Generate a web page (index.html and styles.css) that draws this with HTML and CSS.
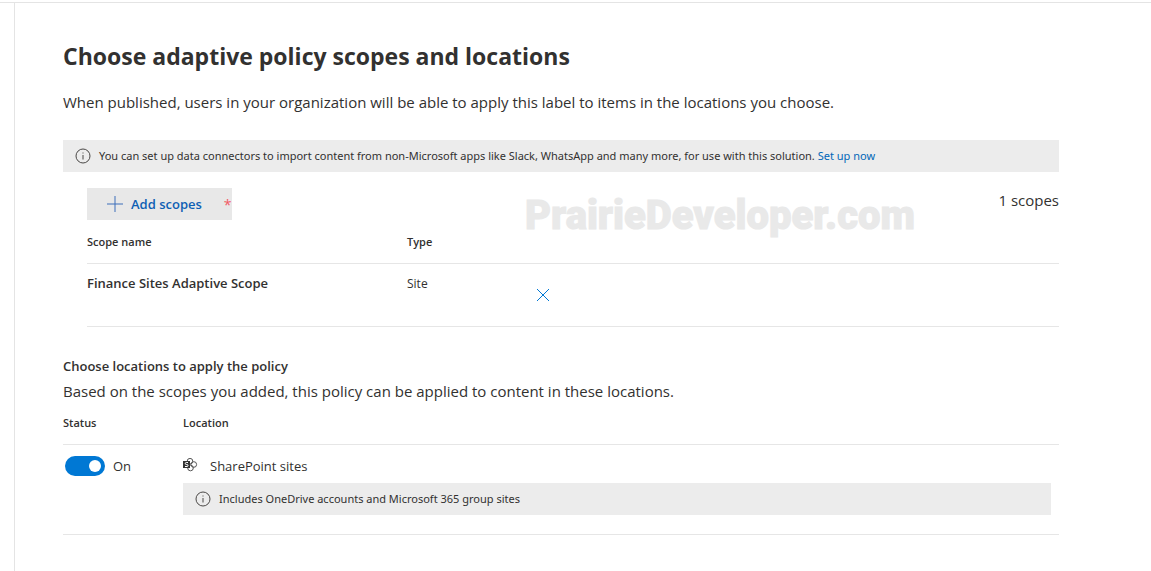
FILE: index.html
```html
<!DOCTYPE html>
<html lang="en">
<head>
<meta charset="utf-8">
<meta name="viewport" content="width=device-width, initial-scale=1">
<title>Choose adaptive policy scopes and locations</title>
<link rel="stylesheet" href="styles.css">
</head>
<body>
<div class="shell">
  <main class="panel">
    <h1 class="title">Choose adaptive policy scopes and locations</h1>
    <p class="lead">When published, users in your organization will be able to apply this label to items in the locations you choose.</p>

    <div class="notice">
      <svg class="info-icon" viewBox="0 0 16 16" aria-hidden="true"><circle cx="8" cy="8" r="7"/><path d="M8 7v4.500M8 4.500v1"/></svg>
      <p class="notice-text">You can set up data connectors to import content from non-Microsoft apps like Slack, WhatsApp and many more, for use with this solution. <a class="link" href="#">Set up now</a></p>
    </div>

    <section class="scopes">
      <div class="toolbar">
        <button class="add-button" type="button">
          <svg class="plus-icon" viewBox="0 0 16 16" aria-hidden="true"><path d="M8 0v16M0 8h16"/></svg>
          <span class="add-label">Add scopes</span>
          <span class="required">*</span>
        </button>
        <span class="count">1 scopes</span>
        <div class="watermark">PrairieDeveloper.com</div>
      </div>
      <table class="grid scope-grid">
        <colgroup><col class="col-name"><col class="col-type"><col></colgroup>
        <thead><tr><th scope="col">Scope name</th><th scope="col">Type</th><td></td></tr></thead>
        <tbody>
          <tr>
            <td class="scope-name">Finance Sites Adaptive Scope</td>
            <td>Site</td>
            <td><button class="remove-button" type="button" aria-label="Remove scope"><svg class="remove-icon" viewBox="0 0 14 14" aria-hidden="true"><path d="M1 1l12 12M13 1L1 13"/></svg></button></td>
          </tr>
        </tbody>
      </table>
    </section>

    <section class="locations">
      <h2 class="subtitle">Choose locations to apply the policy</h2>
      <p class="lead">Based on the scopes you added, this policy can be applied to content in these locations.</p>
      <table class="grid location-grid">
        <colgroup><col class="col-status"><col></colgroup>
        <thead><tr><th scope="col">Status</th><th scope="col">Location</th></tr></thead>
        <tbody>
          <tr>
            <td>
              <label class="switch"><input class="toggle" type="checkbox" role="switch" checked><span>On</span></label>
            </td>
            <td class="location-cell">
              <div class="location">
                <svg class="site-icon" viewBox="0 0 16 16" aria-hidden="true">
                  <circle class="petal" cx="7" cy="3.200" r="2.800"/><circle class="petal" cx="10.800" cy="6.500" r="2.800"/><circle class="petal" cx="7.500" cy="10" r="2.800"/>
                  <rect class="tile" x="0" y="3" width="7" height="7"/>
                  <path class="tile-mark" d="M5 4.500H3.300a1 1 0 0 0 0 2h.700a1 1 0 0 1 0 2h-2"/>
                </svg>
                <span>SharePoint sites</span>
              </div>
              <div class="notice">
                <svg class="info-icon" viewBox="0 0 16 16" aria-hidden="true"><circle cx="8" cy="8" r="7"/><path d="M8 7v4.500M8 4.500v1"/></svg>
                <p class="notice-text">Includes OneDrive accounts and Microsoft 365 group sites</p>
              </div>
            </td>
          </tr>
        </tbody>
      </table>
    </section>
  </main>
</div>
</body>
</html>
```
FILE: styles.css
```css
* { box-sizing: border-box; }

body {
  margin: 0;
  padding-top: 2px;
  background: #fff;
  color: #323130;
  font-family: "Segoe UI", "Open Sans", "Noto Sans", sans-serif;
  font-size: 12px;
  line-height: 16px;
}

h1, h2, p { margin: 0; }

button { border: 0; font-family: inherit; cursor: pointer; }

svg { fill: none; flex: none; }

.shell {
  min-height: calc(100vh - 2px);
  display: flex;
  padding-left: 14px;
  border-top: 1px solid #e4e4e4;
}

.panel {
  flex: 1;
  min-width: 0;
  padding: 37px 92px 36px 48px;
  border-left: 1px solid #e4e4e4;
}

.title {
  margin-bottom: 20px;
  font-size: 23px;
  font-weight: 700;
  line-height: 32px;
}

.lead { font-size: 15px; line-height: 20px; }

.notice {
  display: flex;
  align-items: center;
  gap: 8px;
  min-height: 32px;
  padding: 0 12px;
  background: #ececec;
}

.lead + .notice { margin-top: 28px; }

.info-icon { width: 16px; height: 16px; stroke: #4a4846; }

.notice-text { font-family: "Segoe UI", "Noto Sans", sans-serif; font-size: 11px; }

.link { color: #0067b8; text-decoration: none; }

.scopes { padding: 16px 0 0 24px; }

.toolbar {
  position: relative;
  display: flex;
  justify-content: space-between;
  align-items: flex-start;
}

.add-button {
  display: flex;
  align-items: center;
  height: 32px;
  padding: 0 0 0 20px;
  background: #e8e8e8;
  color: #0f5fb4;
}

.plus-icon { width: 16px; height: 16px; stroke: #3d6fba; }

.add-label { margin: 0 22px 0 8px; font-size: 13px; font-weight: 600; }

.required { color: #f25a66; font-size: 14px; }

.count { font-size: 15px; line-height: 24px; }

.watermark {
  position: absolute;
  top: 0;
  left: 438px;
  color: #e9e9e9;
  font-family: Impact, Roboto, sans-serif;
  font-size: 40px;
  font-weight: 900;
  line-height: 56px;
  -webkit-text-stroke: 1px #e9e9e9;
  pointer-events: none;
}

.grid {
  width: 100%;
  border-collapse: collapse;
  table-layout: fixed;
}

.grid th, .grid td { padding: 0; text-align: left; vertical-align: top; }

.grid tr { border-bottom: 1px solid #e6e6e6; }

.grid thead tr { height: 43px; }

.grid thead th { padding-top: 14px; font-size: 11px; font-weight: 600; }

.scope-grid tbody tr { height: 63px; }

.scope-grid tbody td { padding-top: 12px; }

.col-name { width: 320px; }

.col-type { width: 120px; }

.grid .scope-name { padding-top: 11px; font-size: 13px; font-weight: 600; }

.remove-button {
  display: grid;
  place-items: center;
  width: 32px;
  height: 32px;
  margin-top: 3px;
  padding: 0;
  background: transparent;
}

.remove-icon { width: 14px; height: 14px; stroke: #0078d4; }

.locations { padding-top: 29px; }

.subtitle {
  margin-bottom: 5px;
  font-size: 13px;
  font-weight: 600;
  line-height: 20px;
}

.location-grid thead tr { height: 44px; }

.col-status { width: 120px; }

.switch {
  display: flex;
  align-items: center;
  gap: 8px;
  padding: 11px 0 0 2px;
  font-size: 13px;
  line-height: 20px;
}

.toggle {
  appearance: none;
  display: flex;
  justify-content: flex-end;
  align-items: center;
  width: 40px;
  height: 20px;
  margin: 0;
  padding: 0 4px;
  border-radius: 10px;
  background: #0078d4;
}

.toggle::before {
  content: "";
  width: 12px;
  height: 12px;
  border-radius: 50%;
  background: #fff;
}

.toggle:not(:checked) { justify-content: flex-start; background: #8a8886; }

.grid .location-cell { padding: 11px 8px 19px 0; }

.location {
  display: flex;
  align-items: center;
  gap: 11px;
  margin-bottom: 7px;
  font-size: 13px;
  line-height: 20px;
}

.site-icon { width: 16px; height: 16px; }

.petal { stroke: #555; }

.tile { fill: #333; }

.tile-mark { stroke: #fff; }
```
